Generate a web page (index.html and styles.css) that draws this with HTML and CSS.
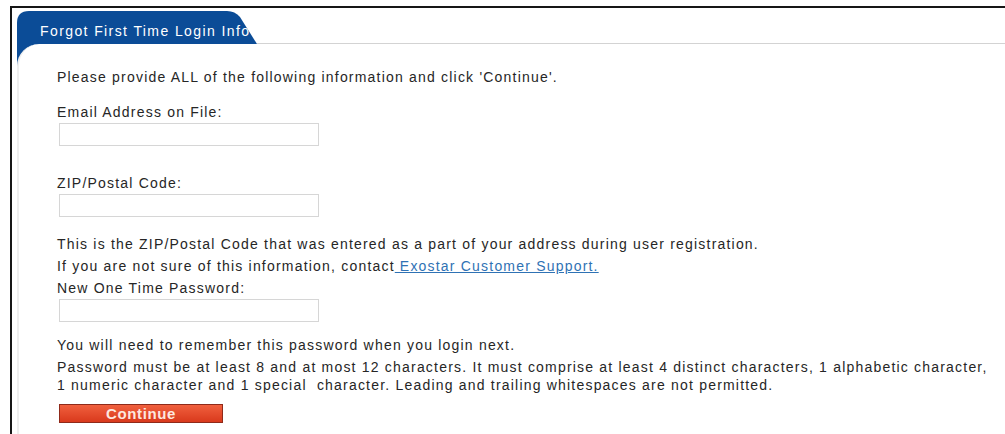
FILE: index.html
```html
<!DOCTYPE html>
<html lang="en">
<head>
<meta charset="utf-8">
<title>Forgot First Time Login Info</title>
<link rel="stylesheet" href="styles.css">
</head>
<body>
<div class="frame">
  <div class="tabbar">
    <div class="tab"><span class="tab-label">Forgot First Time Login Info</span></div>
    <div class="tabline"></div>
  </div>
  <div class="sheet">
    <form class="panel">
      <p class="intro">Please provide ALL of the following information and click 'Continue'.</p>

      <label class="field-label" for="email">Email Address on File:</label>
      <input class="field" id="email" type="text">

      <label class="field-label field-gap" for="zip">ZIP/Postal Code:</label>
      <input class="field" id="zip" type="text">

      <p class="note note-first">This is the ZIP/Postal Code that was entered as a part of your address during user registration.</p>
      <p class="note">If you are not sure of this information, contact<a class="link" href="#"> Exostar Customer Support.</a></p>

      <label class="field-label after-note" for="otp">New One Time Password:</label>
      <input class="field" id="otp" type="password">

      <p class="note note-remember">You will need to remember this password when you login next.</p>
      <p class="note rules">Password must be at least 8 and at most 12 characters. It must comprise at least 4 distinct characters, 1 alphabetic character, 1 numeric character and 1 special &nbsp;character. Leading and trailing whitespaces are not permitted.</p>

      <button class="continue" type="button">Continue</button>
    </form>
  </div>
</div>
</body>
</html>
```

FILE: styles.css
```css
html, body {
  margin: 0;
  background: #fff;
}

body {
  font-family: "Liberation Sans", Arial, sans-serif;
  color: #262626;
  overflow: hidden;
  height: 434px;
}

.frame {
  margin: 6px 0 0 10px;
  border-top: 2px solid #161616;
  border-left: 2px solid #161616;
  height: 428px;
}

/* ---- tab strip ---- */
.tabbar {
  display: flex;
  align-items: flex-end;
  padding: 2px 0 0 5px;
}

.tab {
  width: 240px;
  height: 33px;
  flex: none;
  background: #0b4c97;
  clip-path: path("M0 33 L0 12 Q0 0 12 0 L210 0 Q218 0 223 6 L240 33 Z");
  white-space: nowrap;
  overflow: hidden;
}

.tab-label {
  display: block;
  padding: 12px 0 0 23px;
  font-size: 14px;
  letter-spacing: 1.4px;
  line-height: 17px;
  color: #fff;
}

.tabline {
  flex: 1;
  height: 33px;
  border-bottom: 1px solid #d3d3d3;
}

/* ---- form sheet ---- */
.sheet {
  margin-left: 5px;
  background: linear-gradient(#0b4c97, #0b4c97) no-repeat 0 0 / 26px 26px;
}

.panel {
  background: #fff;
  border-top-left-radius: 22px;
  border-left: 2px solid #eeeeee;
  padding: 24px 0 0 38px;
  height: 380px;
  display: flex;
  flex-direction: column;
  align-items: flex-start;
  font-size: 14px;
  letter-spacing: 1.2px;
  line-height: 18px;
}

.panel p {
  margin: 0;
}

.intro {
  margin-bottom: 17px !important;
}

.field-label {
  display: block;
  margin-bottom: 2px;
}

.field-gap {
  margin-top: 28px;
}

.after-note {
  margin-top: 4px;
}

.field {
  width: 260px;
  height: 23px;
  box-sizing: border-box;
  margin: 0 0 0 2px;
  padding: 0;
  border: 1px solid #d6d6d6;
  background: #fff;
}

.note-first {
  margin-top: 18px !important;
}

.note + .note {
  margin-top: 4px !important;
}

.note-remember {
  margin-top: 14px !important;
}

.rules {
  width: 944px;
  line-height: 18px;
}

.link {
  color: #2f72b4;
  text-decoration: underline;
}

.continue {
  margin: 10px 0 0 2px;
  width: 164px;
  height: 19px;
  padding: 0;
  border: 1px solid #8f2a1a;
  background: linear-gradient(#f0603e, #d9391c);
  color: #fde7df;
  font-family: "Liberation Sans", Arial, sans-serif;
  font-weight: bold;
  font-size: 15px;
  letter-spacing: 0.6px;
  line-height: 17px;
}
```
